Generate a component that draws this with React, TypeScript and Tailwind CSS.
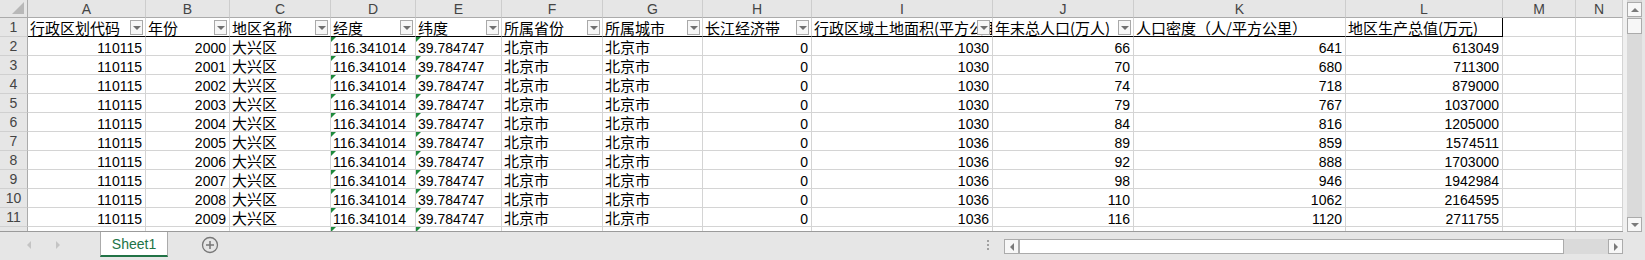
import React from 'react';

const GRID =
  'grid grid-cols-[28px_118px_84px_101px_85px_86px_101px_100px_109px_181px_141px_212px_157px_73px_47px]';

const LETTERS = ['A', 'B', 'C', 'D', 'E', 'F', 'G', 'H', 'I', 'J', 'K', 'L', 'M', 'N'];

const HEADERS: { label: string; filter: boolean }[] = [
  { label: '行政区划代码', filter: true },
  { label: '年份', filter: true },
  { label: '地区名称', filter: true },
  { label: '经度', filter: true },
  { label: '纬度', filter: true },
  { label: '所属省份', filter: true },
  { label: '所属城市', filter: true },
  { label: '长江经济带', filter: true },
  { label: '行政区域土地面积(平方公里)', filter: true },
  { label: '年末总人口(万人)', filter: true },
  { label: '人口密度（人/平方公里）', filter: false },
  { label: '地区生产总值(万元)', filter: false },
];

const POP = [66, 70, 74, 79, 84, 89, 92, 98, 110, 116];
const DENSITY = [641, 680, 718, 767, 816, 859, 888, 946, 1062, 1120];
const GDP = [613049, 711300, 879000, 1037000, 1205000, 1574511, 1703000, 1942984, 2164595, 2711755];

const rows = POP.map((p, i) => ({
  code: '110115',
  year: String(2000 + i),
  name: '大兴区',
  lng: '116.341014',
  lat: '39.784747',
  prov: '北京市',
  city: '北京市',
  yangtze: '0',
  area: i < 5 ? '1030' : '1036',
  pop: String(p),
  density: String(DENSITY[i]),
  gdp: String(GDP[i]),
}));

const num = "font-['Liberation_Sans',sans-serif] text-[14px] leading-[13px]";
const cjk = "font-['Noto_Sans_CJK_SC',sans-serif] text-[15px] leading-[17px]";
const cell = 'relative flex items-end whitespace-nowrap border-r border-b border-[#d4d4d4]';

function Flag() {
  return <span className="absolute left-0 top-0 h-[5px] w-[5px] bg-[#1e8a3c] [clip-path:polygon(0_0,100%_0,0_100%)]" />;
}

function FilterButton() {
  return (
    <span className="absolute right-[2px] top-[2px] flex h-[15px] w-[13px] items-center justify-center border border-[#a9a9a9] bg-[#f7f7f7]">
      <span className="h-0 w-0 border-x-[4px] border-t-[4px] border-x-transparent border-t-[#707070]" />
    </span>
  );
}

function RowHead({ n }: { n?: number }) {
  return (
    <div className="flex items-center justify-center border-r border-b border-r-[#ababab] border-b-[#d0d0d0] bg-[#e6e6e6] font-['Liberation_Sans',sans-serif] text-[14px] leading-[16px] text-[#444]">
      {n}
    </div>
  );
}

function DataRow({ n, r }: { n?: number; r?: (typeof rows)[number] }) {
  return (
    <div className={`${GRID} h-[19px]`}>
      <RowHead n={n} />
      <div className={`${cell} justify-end pr-[3px] ${num}`}>{r?.code}</div>
      <div className={`${cell} justify-end pr-[3px] ${num}`}>{r?.year}</div>
      <div className={`${cell} pl-[2px] ${cjk}`}>{r?.name}</div>
      <div className={`${cell} pl-[2px] ${num}`}>
        <Flag />
        {r?.lng}
      </div>
      <div className={`${cell} pl-[2px] ${num}`}>
        <Flag />
        {r?.lat}
      </div>
      <div className={`${cell} pl-[2px] ${cjk}`}>{r?.prov}</div>
      <div className={`${cell} pl-[2px] ${cjk}`}>{r?.city}</div>
      <div className={`${cell} justify-end pr-[3px] ${num}`}>{r?.yangtze}</div>
      <div className={`${cell} justify-end pr-[3px] ${num}`}>{r?.area}</div>
      <div className={`${cell} justify-end pr-[3px] ${num}`}>{r?.pop}</div>
      <div className={`${cell} justify-end pr-[3px] ${num}`}>{r?.density}</div>
      <div className={`${cell} justify-end pr-[3px] ${num}`}>{r?.gdp}</div>
      <div className={cell} />
      <div className={cell} />
    </div>
  );
}

function ScrollButton({ dir }: { dir: 'up' | 'down' | 'left' | 'right' }) {
  const tri = {
    up: 'border-x-[4px] border-b-[4px] border-x-transparent border-b-[#7a7a7a]',
    down: 'border-x-[4px] border-t-[4px] border-x-transparent border-t-[#7a7a7a]',
    left: 'border-y-[4px] border-r-[4px] border-y-transparent border-r-[#7a7a7a]',
    right: 'border-y-[4px] border-l-[4px] border-y-transparent border-l-[#7a7a7a]',
  }[dir];
  return (
    <div className="flex h-[15px] w-[15px] shrink-0 items-center justify-center border border-[#ababab] bg-[#f7f7f7]">
      <span className={`h-0 w-0 ${tri}`} />
    </div>
  );
}

export default function App() {
  return (
    <div className="flex h-[260px] w-[1645px] flex-col overflow-hidden bg-[#e6e6e6] text-black">
      <div className="flex h-[232px] shrink-0">
        {/* sheet grid */}
        <div className="h-[232px] w-[1623px] shrink-0 overflow-hidden border-b border-[#9b9b9b] bg-white">
          <div className={`${GRID} h-[18px] bg-[#e6e6e6]`}>
            <div className="relative border-r border-b border-[#ababab]">
              <span className="absolute right-[3px] bottom-[3px] h-[12px] w-[12px] bg-[#b8b8b8] [clip-path:polygon(100%_0,100%_100%,0_100%)]" />
            </div>
            {LETTERS.map((l) => (
              <div
                key={l}
                className="flex items-center justify-center border-r border-b border-r-[#cdcdcd] border-b-[#ababab] font-['Liberation_Sans',sans-serif] text-[14px] leading-[16px] text-[#444]"
              >
                {l}
              </div>
            ))}
          </div>

          <div className={`${GRID} h-[19px]`}>
            <RowHead n={1} />
            {HEADERS.map((h, i) => (
              <div
                key={h.label}
                className={`${cell} overflow-hidden pl-[2px] ${cjk} border-b-black ${i === 11 ? 'border-r-black' : ''}`}
              >
                {h.label}
                {h.filter && <FilterButton />}
              </div>
            ))}
            <div className={cell} />
            <div className={cell} />
          </div>

          {rows.map((r, i) => (
            <DataRow key={i} n={i + 2} r={r} />
          ))}
          {/* row 12 is only a sliver, its number stays hidden */}
          <DataRow />
        </div>

        <div className="w-[4px] shrink-0 bg-[#f0f0f0]" />

        {/* vertical scrollbar */}
        <div className="flex w-[15px] shrink-0 flex-col bg-[#dadada] pt-[2px]">
          <ScrollButton dir="up" />
          <div className="mt-[1px] h-[16px] w-[15px] border border-[#ababab] bg-[#f7f7f7]" />
          <div className="flex-1" />
          <ScrollButton dir="down" />
        </div>
      </div>

      {/* sheet tabs + horizontal scrollbar */}
      <div className="flex h-[28px] items-start">
        <div className="flex h-[26px] w-[100px] items-center">
          <span className="ml-[27px] h-0 w-0 border-y-[4px] border-r-[4px] border-y-transparent border-r-[#c4c4c4]" />
          <span className="ml-[25px] h-0 w-0 border-y-[4px] border-l-[4px] border-y-transparent border-l-[#c4c4c4]" />
        </div>
        <div className="flex h-[25px] w-[68px] items-center justify-center border-x border-b-[2px] border-x-[#ababab] border-b-[#217346] bg-white font-['Liberation_Sans',sans-serif] text-[14px] leading-[18px] text-[#217346]">
          Sheet1
        </div>
        <div className="flex h-[26px] w-[82px] items-center justify-center">
          <svg width="18" height="18" viewBox="0 0 18 18" className="ml-[1px]">
            <circle cx="9" cy="9" r="7.5" fill="none" stroke="#777" strokeWidth="1.3" />
            <path d="M9 5v8M5 9h8" stroke="#777" strokeWidth="1.5" />
          </svg>
        </div>
        <div className="flex-1" />
        <div className="flex h-[26px] w-[16px] flex-col items-center justify-center gap-[2px]">
          <span className="h-[2px] w-[2px] bg-[#a0a0a0]" />
          <span className="h-[2px] w-[2px] bg-[#a0a0a0]" />
          <span className="h-[2px] w-[2px] bg-[#a0a0a0]" />
        </div>
        <div className="ml-[8px] mr-[22px] mt-[7px] flex h-[15px] w-[619px] bg-[#dadada]">
          <ScrollButton dir="left" />
          <div className="h-[15px] w-[545px] border border-[#ababab] bg-white" />
          <div className="flex-1" />
          <ScrollButton dir="right" />
        </div>
      </div>
    </div>
  );
}
